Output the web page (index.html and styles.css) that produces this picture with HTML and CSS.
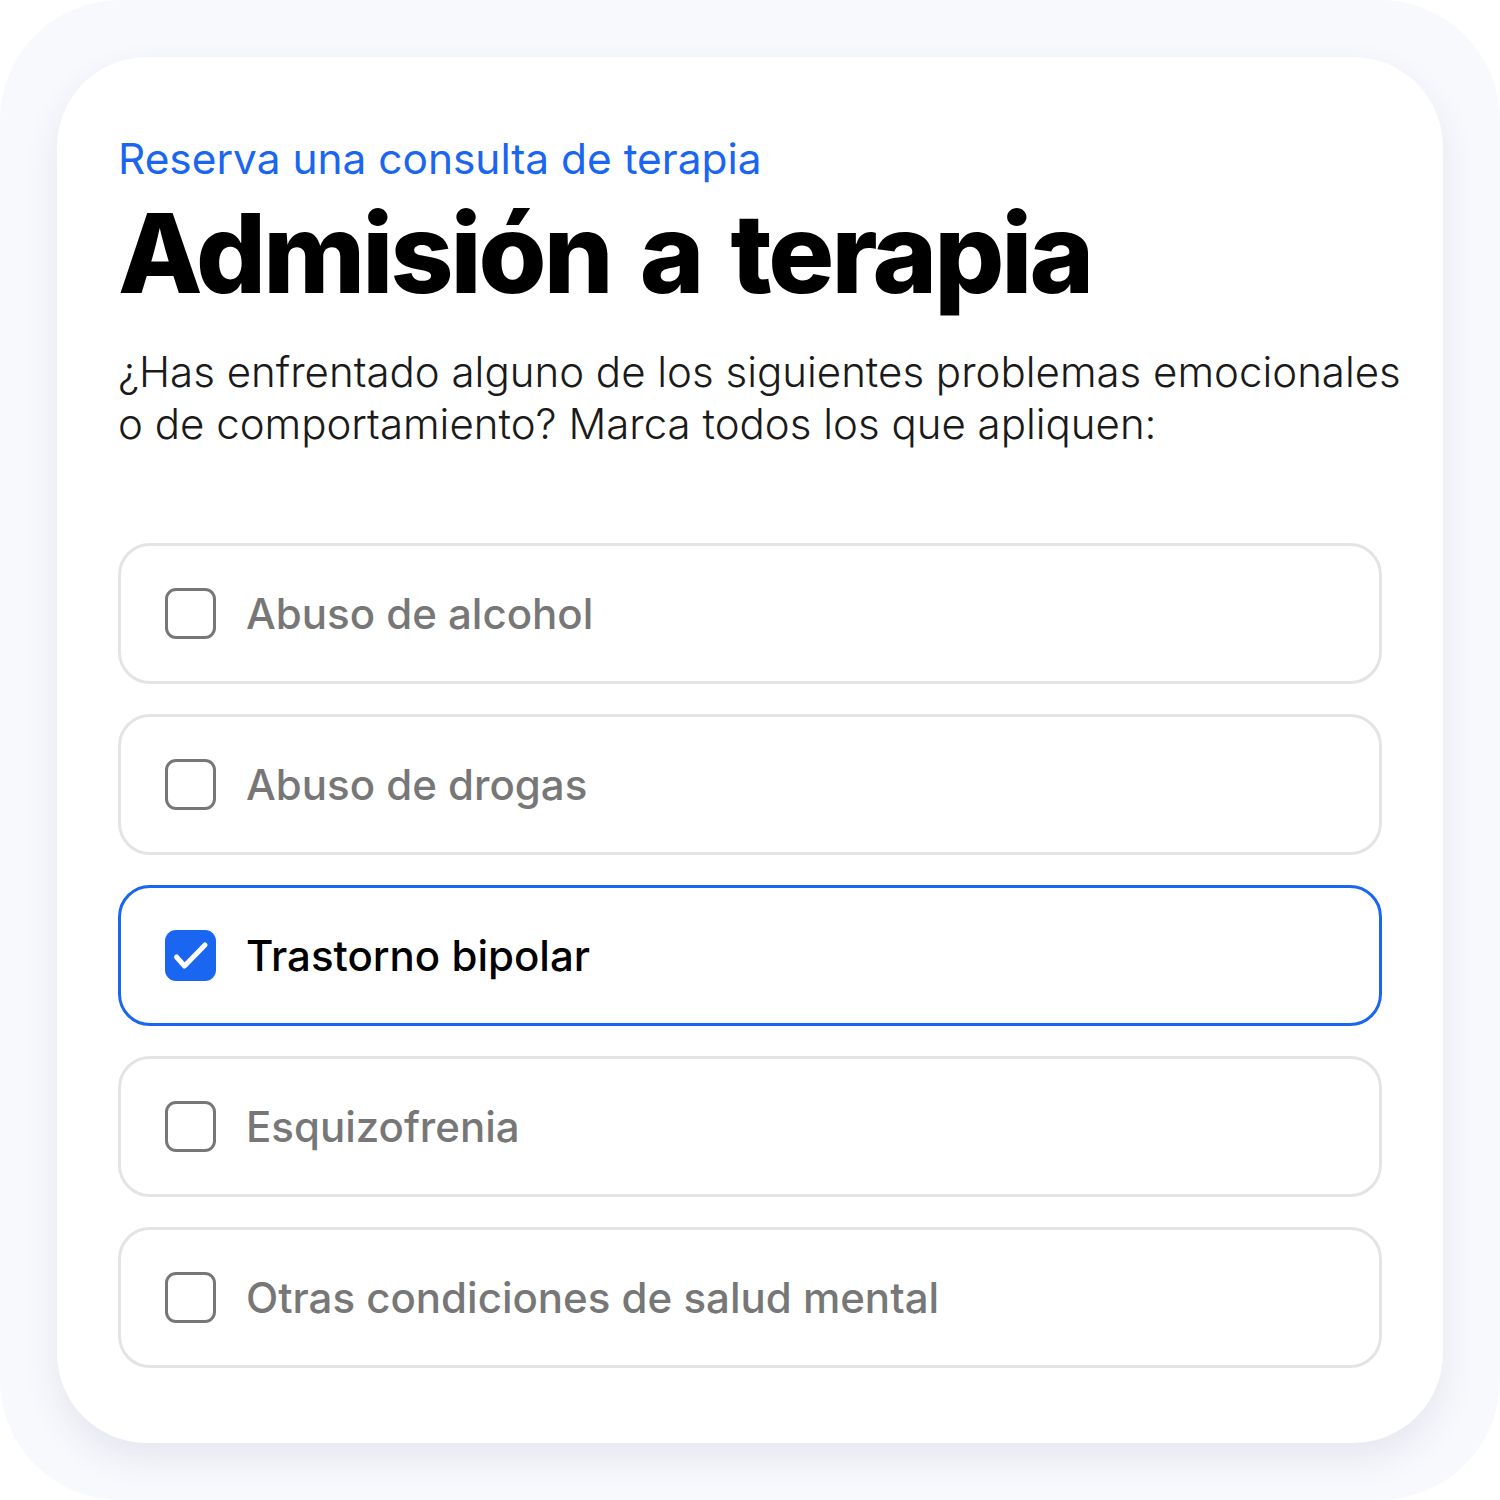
FILE: index.html
```html
<!DOCTYPE html>
<html>
<head>
	<meta charset="utf-8" />
	<title>Admisión a terapia</title>
	<link rel="stylesheet" href="styles.css">
</head>
<body>
<div class="frame">
	<div class="card">
		<p class="eyebrow">Reserva una consulta de terapia</p>
		<h1 class="title">Admisión a terapia</h1>
		<p class="question">¿Has enfrentado alguno de los siguientes problemas emocionales o de comportamiento? Marca todos los que apliquen:</p>
		<ul class="options">
			<li class="option"><span class="box"></span>Abuso de alcohol</li>
			<li class="option"><span class="box"></span>Abuso de drogas</li>
			<li class="option checked">
				<span class="box">
					<svg width="51" height="51" viewBox="0 0 51 51"><path d="M11.5 27l8 9 20.5-21" fill="none" stroke="#fff" stroke-width="5" stroke-linecap="round" stroke-linejoin="round"/></svg>
				</span>Trastorno bipolar</li>
			<li class="option"><span class="box"></span>Esquizofrenia</li>
			<li class="option"><span class="box"></span>Otras condiciones de salud mental</li>
		</ul>
	</div>
</div>
</body>
</html>
```

FILE: styles.css
```css
*{
margin:0;
padding:0;
box-sizing:border-box;
}
body{
background:#fff;
font-family:Inter,"Noto Sans",sans-serif;
}
.frame{
width:1500px;
height:1500px;
background:#f8f9fd;
border-radius:120px;
padding:57px;
}
.card{
height:1386px;
background:#fff;
border-radius:90px;
box-shadow:0 16px 36px rgba(40,50,100,0.09);
padding:76px 61px 0 61px;
}
.eyebrow{
color:#1a66f0;
font-size:42.4px;
line-height:52px;
}
.title{
font-size:110px;
font-weight:800;
letter-spacing:-3px;
word-spacing:8px;
line-height:120px;
color:#000;
margin-top:8px;
}
.question{
font-size:42px;
font-weight:300;
line-height:52px;
color:#1a1a1a;
margin-top:33px;
margin-right:-24px;
}
.options{
list-style:none;
margin-top:93px;
}
.option{
height:141px;
border:3px solid #e4e4e6;
border-radius:32px;
margin-bottom:30px;
display:flex;
align-items:center;
padding-left:44px;
font-size:42px;
font-weight:500;
color:#777;
}
.option .box{
width:51px;
height:51px;
border:3px solid #777;
border-radius:11px;
margin-right:30px;
flex-shrink:0;
}
.checked{
border-color:#1a66f0;
color:#000;
}
.checked .box{
border:0;
background:#1a66f0;
}
.checked svg{
display:block;
}
```
